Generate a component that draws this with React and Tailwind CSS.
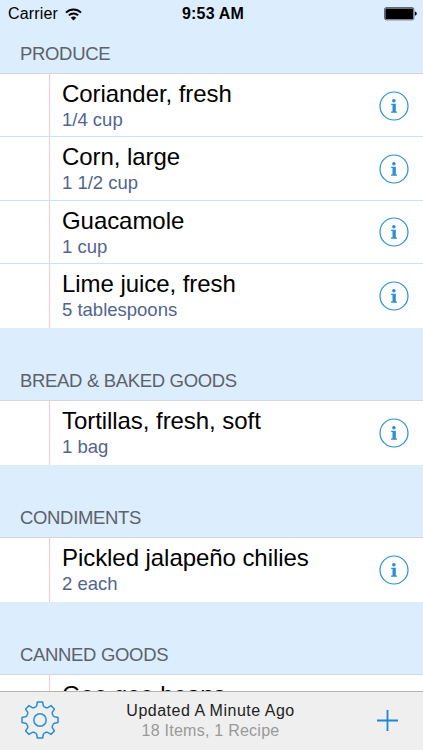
const sections = [
    {
        name: 'PRODUCE',
        items: [
            { name: 'Coriander, fresh', amount: '1/4 cup' },
            { name: 'Corn, large', amount: '1 1/2 cup' },
            { name: 'Guacamole', amount: '1 cup' },
            { name: 'Lime juice, fresh', amount: '5 tablespoons' },
        ],
    },
    {
        name: 'BREAD & BAKED GOODS',
        items: [{ name: 'Tortillas, fresh, soft', amount: '1 bag' }],
    },
    {
        name: 'CONDIMENTS',
        items: [{ name: 'Pickled jalapeño chilies', amount: '2 each' }],
    },
    {
        name: 'CANNED GOODS',
        items: [{ name: 'Goo goo beans' }],
    },
];

function WifiIcon() {
    return (
        <svg width="17" height="13" viewBox="0 0 17 13" fill="none" stroke="#000" strokeWidth="2">
            <path d="M1 4.6 A10.6 10.6 0 0 1 16 4.6" />
            <path d="M3.8 7.4 A6.7 6.7 0 0 1 13.2 7.4" />
            <path d="M8.5 12.4 L5.8 9.7 A3.9 3.9 0 0 1 11.2 9.7 Z" fill="#000" stroke="none" />
        </svg>
    );
}

function BatteryIcon() {
    return (
        <svg width="34" height="14" viewBox="0 0 34 14">
            <rect x="0.6" y="0.6" width="29.3" height="12.2" rx="1.6" fill="none" stroke="#555b62" strokeWidth="1" />
            <rect x="1.4" y="1.4" width="27.7" height="10.6" rx="0.6" fill="#000" />
            <path d="M30.9 4.6 Q32.8 5 32.8 6.7 Q32.8 8.4 30.9 8.8 Z" fill="#000" />
        </svg>
    );
}

function InfoIcon() {
    return (
        <svg width="30" height="30" viewBox="0 0 30 30">
            <circle cx="15" cy="15" r="14" fill="none" stroke="#2a8fd0" strokeWidth="1.2" />
            <circle cx="14.9" cy="9.7" r="1.8" fill="#2a8fd0" />
            <path d="M12.2 12.7 H16.8 V20.5 H18 V21.7 H12 V20.5 H13.5 V13.9 H12.2 Z" fill="#2a8fd0" />
        </svg>
    );
}

function GearIcon() {
    return (
        <svg width="38" height="38" viewBox="-19 -19 38 38" fill="none" stroke="#2a8fd0" strokeWidth="1.5" strokeLinejoin="round">
            <circle r="6.2" />
            <path d="M-2.6 -18 H2.6 L3.3 -14.5 Q3.6 -13.3 4.8 -12.9 L6.2 -12.3 Q7.3 -11.9 8.2 -12.6 L11 -14.4 L14.4 -11 L12.6 -8.2 Q11.9 -7.3 12.3 -6.2 L12.9 -4.8 Q13.3 -3.6 14.5 -3.3 L18 -2.6 V2.6 L14.5 3.3 Q13.3 3.6 12.9 4.8 L12.3 6.2 Q11.9 7.3 12.6 8.2 L14.4 11 L11 14.4 L8.2 12.6 Q7.3 11.9 6.2 12.3 L4.8 12.9 Q3.6 13.3 3.3 14.5 L2.6 18 H-2.6 L-3.3 14.5 Q-3.6 13.3 -4.8 12.9 L-6.2 12.3 Q-7.3 11.9 -8.2 12.6 L-11 14.4 L-14.4 11 L-12.6 8.2 Q-11.9 7.3 -12.3 6.2 L-12.9 4.8 Q-13.3 3.6 -14.5 3.3 L-18 2.6 V-2.6 L-14.5 -3.3 Q-13.3 -3.6 -12.9 -4.8 L-12.3 -6.2 Q-11.9 -7.3 -12.6 -8.2 L-14.4 -11 L-11 -14.4 L-8.2 -12.6 Q-7.3 -11.9 -6.2 -12.3 L-4.8 -12.9 Q-3.6 -13.3 -3.3 -14.5 Z" />
        </svg>
    );
}

function ItemRow({ item, last }) {
    return (
        <li className={`flex h-[63.4px] bg-white ${last ? '' : 'border-b border-b-[#c3e5fa]'}`}>
            <div className="ml-[49px] w-px shrink-0 bg-[#ffc6cd]" />
            <div className="flex-1 pl-3 pt-[6px] whitespace-nowrap">
                <p className="text-[24px] leading-[28px] tracking-[-0.06px] text-black">{item.name}</p>
                {item.amount && <p className="pt-[0.8px] text-[18.5px] leading-[22px] text-[#51648f]">{item.amount}</p>}
            </div>
            <button className="mr-[14px] self-center pt-[0.5px]">
                <InfoIcon />
            </button>
        </li>
    );
}

export default function App() {
    return (
        <div className="flex h-[750px] w-full flex-col overflow-hidden bg-[#dcedfe] font-['Liberation_Sans',Arial,sans-serif]">
            {/* Status bar */}
            <header className="grid h-[28px] shrink-0 grid-cols-3 items-center pl-2 pr-[5px] text-[16px] leading-none text-black">
                <div className="flex items-center gap-[7px] tracking-[0.15px]">
                    <span>Carrier</span>
                    <WifiIcon />
                </div>
                <span className="text-center font-bold tracking-[0.2px]">9:53 AM</span>
                <div className="flex justify-end">
                    <BatteryIcon />
                </div>
            </header>

            {/* Shopping list */}
            <main className="min-h-0 flex-1 overflow-hidden">
                {sections.map((section, index) => (
                    <section key={section.name}>
                        <h2
                            className={`flex items-end border-b border-b-[#d9d3de] pb-[9px] pl-5 text-[18.5px] leading-[21px] tracking-[-0.33px] text-[#5c6268] ${index === 0 ? 'h-[46.1px]' : 'h-[73.63px]'}`}
                        >
                            {section.name}
                        </h2>
                        <ul>
                            {section.items.map((item, i) => (
                                <ItemRow key={item.name} item={item} last={i === section.items.length - 1} />
                            ))}
                        </ul>
                    </section>
                ))}
            </main>

            {/* Toolbar */}
            <footer className="flex h-[59px] shrink-0 items-center border-t border-t-[#b5b5b5] bg-[#efefef] pb-[2px] pl-[21px] pr-[25px]">
                <button>
                    <GearIcon />
                </button>
                <div className="flex-1 pr-[15px] pt-[2px] text-center leading-[20px]">
                    <p className="text-[16px] tracking-[0.5px] text-[#222]">Updated A Minute Ago</p>
                    <p className="text-[16px] tracking-[0.25px] text-[#999]">18 Items, 1 Recipe</p>
                </div>
                <button>
                    <svg width="21" height="21" viewBox="0 0 21 21" stroke="#1f86cf" strokeWidth="1.8">
                        <path d="M10.5 0 V21 M0 10.5 H21" />
                    </svg>
                </button>
            </footer>
        </div>
    );
}
